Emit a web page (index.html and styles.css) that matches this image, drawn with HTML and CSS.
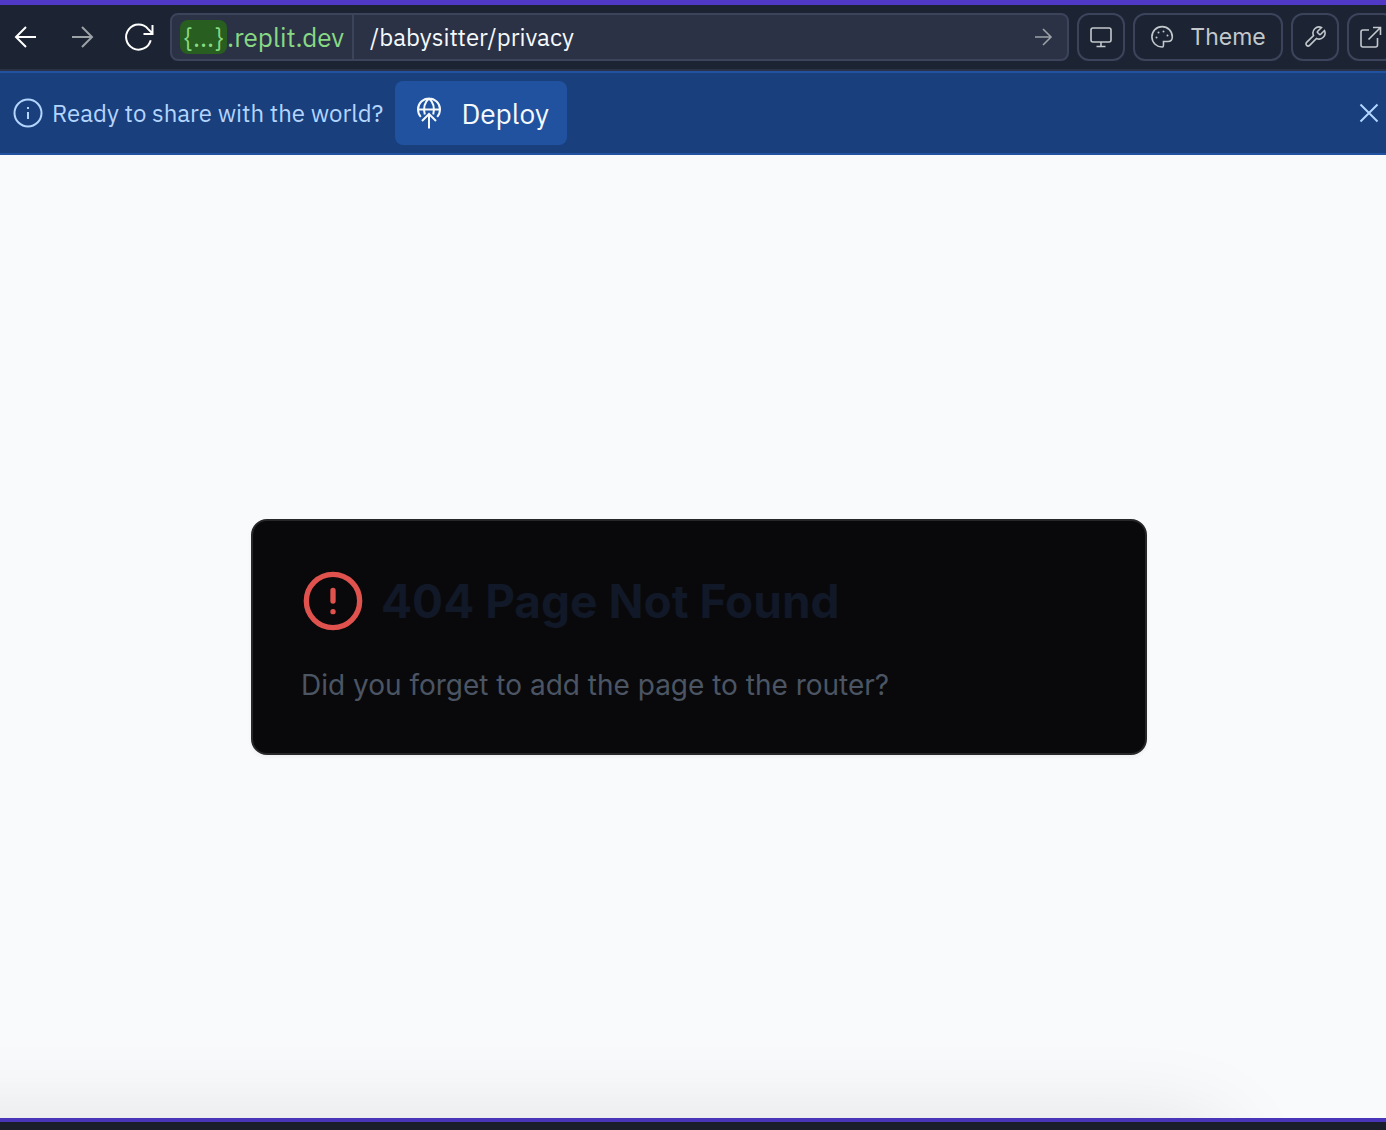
FILE: index.html
```html
<!DOCTYPE html>
<html lang="en">
<head>
<meta charset="utf-8">
<meta name="viewport" content="width=device-width, initial-scale=1">
<title>404 Page Not Found</title>
<link rel="stylesheet" href="styles.css">
</head>
<body>
<div class="webview">
  <header class="toolbar">
    <nav class="nav" aria-label="Page navigation">
      <button class="nav-button" type="button" aria-label="Back">
        <svg width="24" height="24" viewBox="0 0 24 24"><path d="M22 12H2.500M12 2L2 12l10 10"/></svg>
      </button>
      <button class="nav-button muted" type="button" aria-label="Forward">
        <svg width="24" height="24" viewBox="0 0 24 24"><path d="M2 12h19.500M12 2l10 10-10 10"/></svg>
      </button>
      <button class="nav-button" type="button" aria-label="Reload">
        <svg width="32" height="32" viewBox="0 0 32 32"><path d="M28.700 19.200A12.500 12.500 0 1 1 26.200 8.100L30.300 12.300M30.500 4v9h-9"/></svg>
      </button>
    </nav>
    <form class="address">
      <button class="host" type="button"><span class="host-prefix">{...}</span>.replit.dev</button>
      <input class="path" type="text" aria-label="Path" value="/babysitter/privacy">
      <button class="go" type="button" aria-label="Go">
        <svg width="20" height="20" viewBox="0 0 20 20"><path d="M2 10h16M10 2l8 8-8 8"/></svg>
      </button>
    </form>
    <button class="tool" type="button" aria-label="Device size">
      <svg width="24" height="24" viewBox="0 0 24 24"><rect x="2" y="3" width="20" height="14" rx="2"/><path d="M12 17v4M7.500 21.500h9"/></svg>
    </button>
    <button class="tool tool-labelled" type="button">
      <svg width="24" height="24" viewBox="0 0 24 24"><path d="M12.500 22A10.200 10.200 0 1 1 22.300 12c0 3-2 4.500-4.500 4.500h-4.300v2.800c0 1.500 0 2.700-1 2.700z"/><g class="dots"><circle cx="6.500" cy="12.500" r="1"/><circle cx="8.500" cy="7.500" r="1"/><circle cx="13.500" cy="6.500" r="1"/><circle cx="17.500" cy="10.500" r="1"/></g></svg>
      <span>Theme</span>
    </button>
    <button class="tool" type="button" aria-label="Developer tools">
      <svg width="24" height="24" viewBox="0 0 24 24"><path d="M14.700 6.300a1 1 0 0 0 0 1.400l1.600 1.600a1 1 0 0 0 1.400 0l3.770-3.770a6 6 0 0 1-7.940 7.940l-6.910 6.910a2.120 2.120 0 0 1-3-3l6.910-6.910a6 6 0 0 1 7.940-7.940z"/></svg>
    </button>
    <button class="tool" type="button" aria-label="Open in new tab">
      <svg width="24" height="24" viewBox="0 0 24 24"><path d="M10 5H4a2 2 0 0 0-2 2v13a2 2 0 0 0 2 2h12.500a2 2 0 0 0 2-2v-7M14 2.500h7.500V10M21.500 2.500L9.500 14.500"/></svg>
    </button>
  </header>

  <section class="banner">
    <svg class="info" width="32" height="32" viewBox="0 0 32 32"><circle cx="16" cy="16" r="13.500"/><path d="M16 15v7M16 10v2"/></svg>
    <p class="banner-text">Ready to share with the world?</p>
    <button class="deploy" type="button">
      <svg width="32" height="32" viewBox="0 0 32 32"><path d="M7.800 19.800A11 11 0 1 1 24.200 19.800M5 12.500h22M11.800 17.500c-1.500-6-.5-12 4.200-16 4.700 4 5.700 10 4.200 16M16 31.500V17M9 24l7-7 7 7"/></svg>
      <span>Deploy</span>
    </button>
    <button class="close" type="button" aria-label="Dismiss">
      <svg width="20" height="20" viewBox="0 0 20 20"><path d="M1.500 1.500l17 17M18.500 1.500l-17 17"/></svg>
    </button>
  </section>

  <main class="page">
    <article class="card">
      <div class="card-head">
        <svg class="alert" width="64" height="64" viewBox="0 0 24 24"><circle cx="12" cy="12" r="10"/><path d="M12 8v4M12 16h.01"/></svg>
        <h1>404 Page Not Found</h1>
      </div>
      <p>Did you forget to add the page to the router?</p>
    </article>
  </main>
</div>
</body>
</html>
```
FILE: styles.css
```css
* {
  box-sizing: border-box;
}

body {
  margin: 0;
  background: #1a1e2a;
  font-family: Inter, "Liberation Sans", sans-serif;
  overflow: hidden;
}

h1,
p {
  margin: 0;
}

button,
input {
  margin: 0;
  padding: 0;
  border: 0;
  background: none;
  color: inherit;
  font: inherit;
}

svg {
  flex: none;
  fill: none;
  stroke: currentColor;
  stroke-width: 2;
}

/* The preview pane runs slightly past the right edge of the window. */
.webview {
  display: flex;
  flex-direction: column;
  width: calc(100% + 12px);
  height: calc(100vh - 8px);
  border-top: 5px solid #4f39c6;
  border-bottom: 4px solid #4935b8;
}

.toolbar {
  display: flex;
  align-items: center;
  gap: 8px;
  height: 66px;
  padding: 0 3px 0 2px;
  border-bottom: 2px solid #2b3245;
  background: #1c2333;
  color: #c2c8cc;
}

.nav {
  display: flex;
  gap: 8px;
  color: #ffffff;
}

.nav-button {
  display: flex;
  align-items: center;
  justify-content: center;
  width: 48px;
  height: 48px;
}

.nav-button.muted {
  color: #9da2a6;
}

.address {
  display: flex;
  flex: 1;
  height: 48px;
  min-width: 0;
  border: 2px solid #3c445c;
  border-radius: 8px;
  background: #2b3245;
  font-family: "IBM Plex Sans", Roboto, sans-serif;
  font-size: 24px;
}

.host {
  display: flex;
  align-items: center;
  padding: 0 8px;
  border-right: 2px solid #3c445c;
  color: #87d984;
  font-size: 26px;
}

.host-prefix {
  padding: 0 4px;
  border-radius: 8px;
  background: #285e1f;
  line-height: 34px;
}

.path {
  flex: 1;
  min-width: 0;
  padding-left: 16px;
  color: #f5f9fc;
}

.go {
  display: flex;
  align-items: center;
  padding: 0 14px;
  color: #9da2a6;
}

.go svg,
.tool svg {
  stroke-width: 1.6;
}

.tool {
  display: flex;
  align-items: center;
  justify-content: center;
  gap: 16px;
  width: 48px;
  height: 48px;
  border: 2px solid #3c445c;
  border-radius: 12px;
  font-size: 23px;
}

.tool-labelled {
  width: 150px;
}

.tool .dots {
  fill: currentColor;
  stroke: none;
}

.banner {
  display: flex;
  align-items: center;
  height: 84px;
  padding: 0 19px 0 12px;
  border-top: 2px solid #2052a0;
  border-bottom: 2px solid #2052a0;
  background: #193f7d;
  color: #b3d5ff;
  font-family: "IBM Plex Sans", Roboto, sans-serif;
}

.banner-text {
  margin: 0 12px 0 8px;
  font-size: 24px;
}

.deploy {
  display: flex;
  align-items: center;
  justify-content: center;
  gap: 16px;
  width: 172px;
  height: 64px;
  border-radius: 8px;
  background: #2052a0;
  color: #f5f9fc;
  font-size: 28px;
}

.close {
  display: flex;
  margin-left: auto;
}

.page {
  position: relative;
  display: flex;
  flex: 1;
  align-items: center;
  justify-content: center;
  overflow: hidden;
  background: #f9fafb;
}

/* Shadow cast upward by the panel below the preview. */
.page::after {
  content: "";
  position: absolute;
  top: 100%;
  left: -10%;
  width: 97%;
  height: 100px;
  box-shadow: 0 16px 96px rgb(0 0 0 / 14%);
}

.card {
  width: 100%;
  max-width: 896px;
  padding: 48px;
  border: 2px solid #27272a;
  border-radius: 16px;
  background: #09090b;
  box-shadow: 0 2px 4px rgb(0 0 0 / 5%);
}

.card-head {
  display: flex;
  align-items: center;
  gap: 16px;
  margin-bottom: 32px;
}

.alert {
  color: #e0524d;
  stroke-linecap: round;
}

.card h1 {
  color: #111827;
  font-size: 46px;
  font-weight: 700;
  line-height: 64px;
}

.card p {
  color: #4b5563;
  font-size: 28px;
  line-height: 40px;
}
```
